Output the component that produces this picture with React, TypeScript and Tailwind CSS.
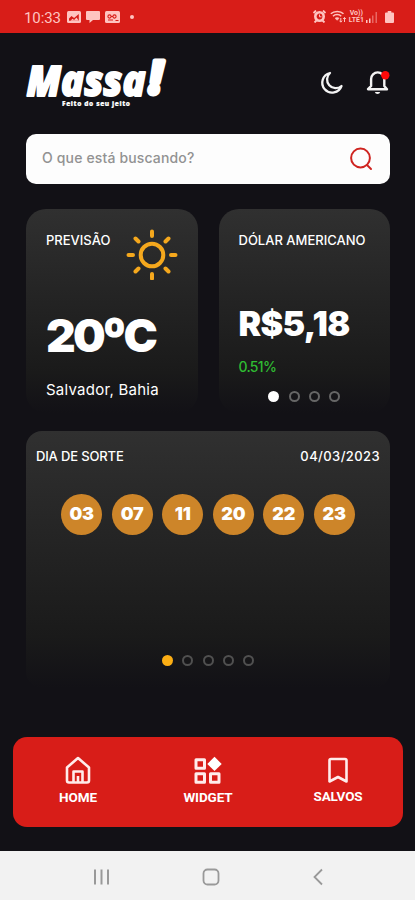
import type { ReactNode } from "react";

const LUCKY_NUMBERS = ["03", "07", "11", "20", "22", "23"];

// Android status bar with the clock, notification icons and signal icons.
function StatusBar() {
  return (
    <div className="flex h-[33px] items-center bg-[#d81d18] pl-[24px] pr-[21px] text-[#ffc4c0]">
      <span className="font-['Roboto'] text-[15px] leading-[18px] tracking-[-0.1px] mt-[2px]">10:33</span>
      <svg className="ml-[6px] h-[12px] w-[14px]" viewBox="0 0 14 12">
        <rect width="14" height="12" rx="1.5" fill="currentColor" />
        <path d="M2 9.8V7.5L4.5 5l2.6 2L11.8 3v6.8z" fill="#d81d18" />
        <path d="M3.5 9.8l2-2 1.6 1.2L9.5 6.5l2.3 3.3z" fill="currentColor" />
      </svg>
      <svg className="ml-[5px] mt-[1px] h-[12px] w-[14px]" viewBox="0 0 14 12">
        <path d="M1 0h12a1 1 0 0 1 1 1v7a1 1 0 0 1-1 1H7l-3.5 3V9H1a1 1 0 0 1-1-1V1a1 1 0 0 1 1-1z" fill="currentColor" />
      </svg>
      <svg className="ml-[5px] h-[12px] w-[15px]" viewBox="0 0 15 12">
        <rect width="15" height="12" rx="1.5" fill="currentColor" />
        <g fill="none" stroke="#d81d18" strokeWidth="1.1">
          <circle cx="4.5" cy="5.5" r="1.6" />
          <circle cx="9.5" cy="5.5" r="1.6" />
          <path d="M3 9h5M10.5 9.5h3M6 5.5h2" />
        </g>
      </svg>
      <span className="ml-[10px] size-[4px] rounded-full bg-[#ffc4c0]" />
      <div className="ml-auto flex items-center">
        <svg className="h-[13px] w-[13px]" viewBox="0 0 13 13">
          <path d="M0.5 3L3 0.5M12.5 3L10 0.5M1.5 12.5l2-2M11.5 12.5l-2-2" stroke="currentColor" strokeWidth="1.8" />
          <circle cx="6.5" cy="6.5" r="4.2" fill="none" stroke="currentColor" strokeWidth="2.6" />
          <path d="M6.5 4.5v2.3h2" fill="none" stroke="currentColor" />
        </svg>
        <svg className="ml-[4px] h-[13px] w-[17px]" viewBox="0 0 17 13" fill="none" stroke="currentColor" strokeWidth="1.5">
          <path d="M0.8 3.8C4 0.6 10.5 0.6 13.5 3.8M3 6.3c2-2.3 6.2-2.3 8.2 0" />
          <path d="M5 8.3c1.2-1.2 3-1.2 4.2 0L7.1 10.3z" fill="currentColor" strokeWidth="0.5" />
          <path d="M10.8 8v4M9.5 10.7l1.3 1.5 1.3-1.5M14.5 12V7.5M13.2 9l1.3-1.5L15.8 9" strokeWidth="1" />
        </svg>
        <div className="ml-[2px] flex flex-col items-center font-['Roboto'] text-[7px] font-bold leading-[6.5px]">
          <span>Vo))</span>
          <span>LTE1</span>
        </div>
        <svg className="ml-[2px] h-[12px] w-[12px]" viewBox="0 0 12 12">
          <path d="M0 9h1.5v3H0zM3 7.5h1.5V12H3z" fill="currentColor" />
          <path d="M6 4.5h1.5V12H6zM9.5 1H11v11H9.5z" fill="currentColor" opacity="0.45" />
        </svg>
        <svg className="ml-[7px] h-[12px] w-[9px]" viewBox="0 0 9 12">
          <path d="M2.7 0h3.6v1.5H8a1 1 0 0 1 1 1V11a1 1 0 0 1-1 1H1a1 1 0 0 1-1-1V2.5a1 1 0 0 1 1-1h1.7z" fill="currentColor" />
        </svg>
      </div>
    </div>
  );
}

// Brand wordmark with its tagline.
function Logo() {
  return (
    <svg
      className="h-[52px] w-[144px] overflow-visible"
      viewBox="0 0 144 52"
      fill="#fff"
      stroke="#fff"
      strokeLinejoin="round"
      fontFamily="Open Sans, sans-serif"
      fontWeight="800"
      fontStyle="italic"
    >
      <text x="1.5" y="39" fontSize="42" strokeWidth="1.8" textLength="119" lengthAdjust="spacingAndGlyphs">
        Massa
      </text>
      <text x="124" y="37" fontSize="46" strokeWidth="5" textLength="13" lengthAdjust="spacingAndGlyphs">
        !
      </text>
      <text x="37" y="49" fontSize="6.5" strokeWidth="0.2" fontStyle="normal" textLength="68" lengthAdjust="spacing">
        Feito do seu jeito
      </text>
    </svg>
  );
}

// Page dots below a carousel card.
function Dots({ count, activeClass, idleClass }: { count: number; activeClass: string; idleClass: string }) {
  return (
    <div className="flex justify-center gap-[9.3px]">
      {Array.from({ length: count }, (_, i) => (
        <span key={i} className={`size-[11px] rounded-full ${i === 0 ? activeClass : `border-2 ${idleClass}`}`} />
      ))}
    </div>
  );
}

function NavItem({ label, children }: { label: string; children: ReactNode }) {
  return (
    <button type="button" className="flex w-[130px] flex-col items-center text-white">
      {children}
      <span className="mt-[3px] font-['Roboto'] text-[13.5px] font-bold leading-[17px] tracking-[-0.1px]">{label}</span>
    </button>
  );
}

export default function App() {
  return (
    <div className="flex h-[900px] w-[415px] flex-col overflow-hidden bg-[#121116] font-['Inter',sans-serif] text-white">
      <StatusBar />

      <header className="flex h-[101px] items-start justify-between pl-[25px] pr-[24px] pt-[24px]">
        <Logo />
        <div className="flex pt-[11px]">
          <svg className="h-[28px] w-[26px]" viewBox="0 0 26 28" fill="none" stroke="#f4f4f4" strokeWidth="2.3" strokeLinejoin="round">
            <path d="M11 5A9.900 9.900 0 1 0 22.500 18 8.600 8.600 0 0 1 11 5Z" />
          </svg>
          <svg className="ml-[18px] h-[28px] w-[28px]" viewBox="0 0 28 28" fill="none" stroke="#f4f4f4" strokeWidth="2.4" strokeLinejoin="round">
            <path d="M5 21.2h19L21.3 18v-7a6.6 6.6 0 0 0-13.2 0v7Z" />
            <path d="M11.8 24a2.8 2.8 0 0 0 5.4 0z" fill="#f4f4f4" stroke="none" />
            <circle cx="22.3" cy="7.3" r="4.2" fill="#ff0a0a" stroke="none" />
          </svg>
        </div>
      </header>

      <main className="flex flex-col pl-[26px] pr-[25px]">
        <div className="flex h-[50px] items-center justify-between rounded-[10px] bg-[#fdfdfd] pl-[16px] pr-[17px]">
          <span className="pb-[3px] text-[14px] font-medium tracking-[0.15px] text-[#929292]">O que está buscando?</span>
          <svg className="h-[24px] w-[24px]" viewBox="0 0 24 24" fill="none" stroke="#cf2420" strokeWidth="2" strokeLinecap="round">
            <circle cx="11.5" cy="11" r="9.4" />
            <path d="M18 18l4 4" />
          </svg>
        </div>

        <div className="mt-[25px] grid grid-cols-2 gap-[21px]">
          <section className="relative flex h-[204px] flex-col rounded-[20px] bg-linear-to-b from-[#303030] via-[#1a1a1a] via-80% to-[#121116] px-[20px] pt-[21px]">
            <h2 className="text-[13px] font-medium leading-[20px]">PREVISÃO</h2>
            <svg className="absolute left-[100px] top-[19px] h-[52px] w-[52px]" viewBox="0 0 52 52" fill="none" stroke="#f5a81d" strokeWidth="4" strokeLinecap="round">
              <circle cx="26" cy="27" r="11.3" />
              <path d="M26 3.5v4.5M26 46v4.5M2.5 27h4.5M45 27h4.5M9.5 10.5l3 3M39.5 40.5l3 3M9.5 43.5l3-3M39.5 13.5l3-3" />
            </svg>
            <p className="mt-[61px] whitespace-nowrap text-[46px] font-black leading-[48px] tracking-[-2.8px]">
              20<span className="[-webkit-text-stroke:2.5px_white]">º</span>C
            </p>
            <p className="mt-[21px] whitespace-nowrap text-[15px] leading-[20px] tracking-[0.25px]">Salvador, Bahia</p>
          </section>

          <section className="flex h-[204px] flex-col rounded-[20px] bg-linear-to-b from-[#303030] via-[#1a1a1a] via-80% to-[#121116] px-[20px] pt-[21px]">
            <h2 className="whitespace-nowrap text-[13px] font-medium leading-[20px]">DÓLAR AMERICANO</h2>
            <p className="mt-[54px] whitespace-nowrap text-[34px] font-black leading-[40px] tracking-[-0.7px]">R$5,18</p>
            <p className="mt-[13px] text-[14px] font-medium leading-[20px] tracking-[-0.7px] text-[#2fbd32]">0.51%</p>
            <div className="mt-[14px]">
              <Dots count={4} activeClass="bg-white" idleClass="border-[#666]" />
            </div>
          </section>
        </div>

        <section className="mt-[18px] flex h-[257px] flex-col rounded-[16px] bg-linear-to-b from-[#303030] via-[#1a1a1a] via-80% to-[#121116] px-[10px] pt-[15px]">
          <div className="flex justify-between text-[13px] font-medium leading-[20px]">
            <h2 className="tracking-[-0.15px]">DIA DE SORTE</h2>
            <span className="tracking-[0.4px]">04/03/2023</span>
          </div>
          <div className="mt-[28px] flex justify-center gap-[9.5px]">
            {LUCKY_NUMBERS.map((n) => (
              <span
                key={n}
                className="flex size-[41px] items-center justify-center rounded-full bg-[#cd8529] pb-[3px] text-[18px] font-black tracking-[-0.2px]"
              >
                {n}
              </span>
            ))}
          </div>
          <div className="mt-[120px]">
            <Dots count={5} activeClass="bg-[#fcae14]" idleClass="border-[#505050]" />
          </div>
        </section>
      </main>

      <nav className="ml-[13px] mr-[12px] mt-[49px] flex h-[90px] justify-between rounded-[14px] bg-[#d81d18] pt-[19px]">
        <NavItem label="HOME">
          <svg className="h-[30px] w-[30px]" viewBox="0 0 30 30" fill="none" stroke="#ffeceb" strokeWidth="2.6" strokeLinejoin="round">
            <path d="M4 11.5L15 2l11 9.5v13a2 2 0 0 1-2 2H6a2 2 0 0 1-2-2z" />
            <path d="M10.5 26.5v-11h9v11M15 20v6" />
          </svg>
        </NavItem>
        <NavItem label="WIDGET">
          <svg className="h-[30px] w-[30px]" viewBox="0 0 30 30" fill="none" stroke="#ffeceb" strokeWidth="3" strokeLinejoin="round">
            <path d="M3 3.7h8.5v8.5H3zM3 17.7h8.5v8.5H3zM17.5 17.7H26v8.5h-8.5z" />
            <path d="M21.5 0.7L28.7 7.9l-7.2 7.2-7.2-7.2z" fill="#fff" stroke="none" />
          </svg>
        </NavItem>
        <NavItem label="SALVOS">
          <svg className="-mt-[1px] h-[30px] w-[30px]" viewBox="0 0 30 30" fill="none" stroke="#ffeceb" strokeWidth="2.6" strokeLinejoin="round">
            <path d="M6.5 5.5a1.5 1.5 0 0 1 1.5-1.5h14a1.5 1.5 0 0 1 1.5 1.5V26.5L15 22 6.5 26.5z" />
          </svg>
        </NavItem>
      </nav>

      {/* System navigation buttons */}
      <footer className="mt-auto flex h-[49px] items-center justify-between bg-[#f2f2f2] pl-[93px] pr-[91px] pt-[2px] text-[#999]">
        <svg className="h-[18px] w-[17px]" viewBox="0 0 17 18" stroke="currentColor" strokeWidth="2">
          <path d="M2 1.5v15M8.5 1.5v15M15 1.5v15" />
        </svg>
        <svg className="h-[18px] w-[18px]" viewBox="0 0 18 18" fill="none" stroke="currentColor" strokeWidth="1.8">
          <rect x="1.5" y="1.5" width="15" height="15" rx="4" />
        </svg>
        <svg className="h-[18px] w-[12px]" viewBox="0 0 12 18" fill="none" stroke="currentColor" strokeWidth="1.8">
          <path d="M10 1.5L2.5 9l7.5 7.5" />
        </svg>
      </footer>
    </div>
  );
}
